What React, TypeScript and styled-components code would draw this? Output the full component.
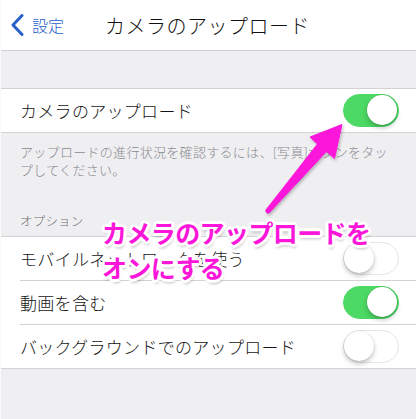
import React from "react";
import styled, { createGlobalStyle, css } from "styled-components";

const GlobalStyle = createGlobalStyle`
  html, body {
    margin: 0;
    padding: 0;
    background: #efeff2;
  }
  body {
    font-family: "Noto Sans CJK JP", "Noto Sans", sans-serif;
    -webkit-font-smoothing: antialiased;
  }
`;

const Screen = styled.div`
  position: relative;
  width: 416px;
  height: 419px;
  overflow: hidden;
  background: #efeff2;
  border-left: 1px solid #fafafa;
  box-sizing: border-box;
`;

const NavBar = styled.header`
  display: grid;
  grid-template-columns: 1fr auto 1fr;
  align-items: center;
  height: 50px;
  background: #ffffff;
  border-bottom: 1px solid #cfcfd4;
`;

const BackButton = styled.div`
  display: flex;
  align-items: center;
  gap: 8px;
  padding-left: 9px;
  color: #2660c8;
  font-size: 16px;
  font-weight: 300;
  letter-spacing: 0;
`;

const Title = styled.h1`
  margin: 0;
  font-size: 20px;
  font-weight: 300;
  color: #111;
  letter-spacing: 0.5px;
  padding-right: 2px;
`;

const Spacer = styled.div`
  height: 37px;
`;

const Group = styled.section`
  background: #ffffff;
  border-top: 1px solid #d3d3d7;
  border-bottom: 1px solid #d3d3d7;
`;

const Row = styled.div<{ $last?: boolean }>`
  position: relative;
  display: flex;
  align-items: center;
  justify-content: space-between;
  height: 43px;
  padding: 0 17px 0 19px;
  ${(p) =>
    !p.$last &&
    css`
      &::after {
        content: "";
        position: absolute;
        left: 19px;
        right: 0;
        bottom: -1px;
        height: 1px;
        background: #d3d3d7;
      }
    `}
  & + & {
    margin-top: 1px;
  }
`;

const Label = styled.span`
  font-size: 17px;
  font-weight: 300;
  color: #151515;
  letter-spacing: 0.3px;
`;

const Footer = styled.p`
  margin: 0;
  padding: 10px 22px 0 19px;
  font-size: 13px;
  font-weight: 300;
  line-height: 18px;
  color: #8a8a8f;
  letter-spacing: 0.3px;
`;

const SectionHeader = styled.h2`
  margin: 0;
  padding: 33px 19px 6px;
  font-size: 12.5px;
  font-weight: 300;
  line-height: 18px;
  color: #707075;
  letter-spacing: 0.2px;
`;

const Track = styled.div<{ $on: boolean }>`
  position: relative;
  width: 56px;
  height: 33px;
  border-radius: 17px;
  box-sizing: border-box;
  background: ${(p) => (p.$on ? "#4cd964" : "#ffffff")};
  border: 1.5px solid ${(p) => (p.$on ? "#4cd964" : "#e6e6e6")};
  flex-shrink: 0;
`;

const Knob = styled.div<{ $on: boolean }>`
  position: absolute;
  top: 0;
  left: ${(p) => (p.$on ? "23px" : "0")};
  width: 30px;
  height: 30px;
  border-radius: 50%;
  background: #ffffff;
  box-shadow: 0 3px 5px rgba(0, 0, 0, 0.22), 0 0 0 0.5px rgba(0, 0, 0, 0.1);
`;

const Toggle = ({ on }: { on: boolean }) => (
  <Track $on={on}>
    <Knob $on={on} />
  </Track>
);

const Callout = styled.div`
  position: absolute;
  left: 101px;
  top: 215px;
  font-size: 25px;
  font-weight: 700;
  line-height: 35px;
  color: #fb16da;
  letter-spacing: -0.6px;
  pointer-events: none;
  text-shadow:
    2px 0 0 #fff, -2px 0 0 #fff, 0 2px 0 #fff, 0 -2px 0 #fff,
    2px 2px 0 #fff, -2px -2px 0 #fff, 2px -2px 0 #fff, -2px 2px 0 #fff,
    3px 0 0 #fff, -3px 0 0 #fff, 0 3px 0 #fff, 0 -3px 0 #fff,
    1px 4px 3px rgba(0, 0, 0, 0.25);
`;

const CalloutLine = styled.div``;

const ArrowLayer = styled.svg`
  position: absolute;
  left: 0;
  top: 0;
  pointer-events: none;
`;

const Chevron = () => (
  <svg width="14" height="22" viewBox="0 0 14 22">
    <path d="M12 1.5 L3 11 L12 20.5" fill="none" stroke="#2660c8" strokeWidth="3" strokeLinecap="round" strokeLinejoin="round" />
  </svg>
);

// Tapered pink arrow pointing at the first switch
const Arrow = () => (
  <ArrowLayer width="416" height="419" viewBox="0 0 416 419">
    <defs>
      <filter id="arrowShadow" x="-20%" y="-20%" width="140%" height="140%">
        <feDropShadow dx="1" dy="2" stdDeviation="1.5" floodColor="#000" floodOpacity="0.25" />
      </filter>
    </defs>
    <path
      d="M266 213 L264.5 210.5 L316.5 144 L309 137 L341 124.5 L333.5 158.5 L325.5 151.5 L268 213 Z"
      fill="#fb16da"
      stroke="#fb16da"
      strokeWidth="1"
      strokeLinejoin="round"
      filter="url(#arrowShadow)"
    />
  </ArrowLayer>
);

export default function App() {
  return (
    <>
      <GlobalStyle />
      <Screen>
        <NavBar>
          <BackButton>
            <Chevron />
            <span>設定</span>
          </BackButton>
          <Title>カメラのアップロード</Title>
          <div />
        </NavBar>
        <Spacer />
        <Group>
          <Row $last>
            <Label>カメラのアップロード</Label>
            <Toggle on />
          </Row>
        </Group>
        <Footer>
          アップロードの進行状況を確認するには、[写真]ボタンをタップしてください。
        </Footer>
        <SectionHeader>オプション</SectionHeader>
        <Group>
          <Row>
            <Label>モバイルネットワークを使う</Label>
            <Toggle on={false} />
          </Row>
          <Row>
            <Label>動画を含む</Label>
            <Toggle on />
          </Row>
          <Row $last>
            <Label>バックグラウンドでのアップロード</Label>
            <Toggle on={false} />
          </Row>
        </Group>
        <Arrow />
        <Callout>
          <CalloutLine>カメラのアップロードを</CalloutLine>
          <CalloutLine>オンにする</CalloutLine>
        </Callout>
      </Screen>
    </>
  );
}
